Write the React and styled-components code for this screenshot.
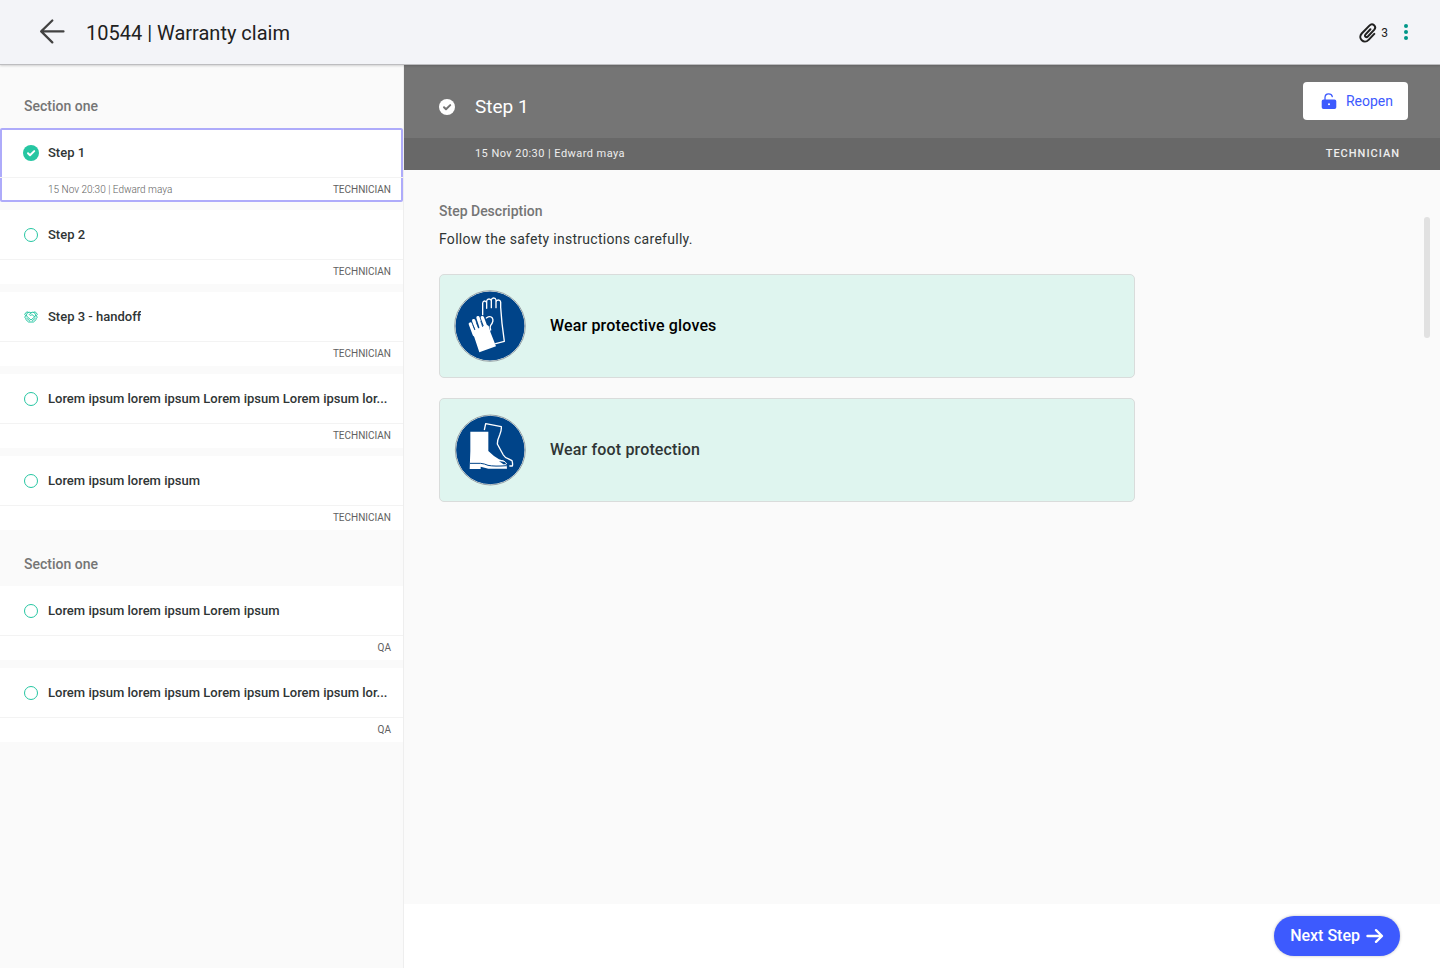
import React, { useState } from "react";
import styled, { createGlobalStyle } from "styled-components";

const GlobalStyle = createGlobalStyle`
  * {
    box-sizing: border-box;
  }
  body {
    margin: 0;
    font-family: Roboto, "Liberation Sans", sans-serif;
    color: #2f3535;
    background: #fafafa;
  }
  button {
    font-family: inherit;
    border: 0;
    padding: 0;
    background: none;
    cursor: pointer;
  }
  h1, h2, h3, p, ul {
    margin: 0;
    padding: 0;
  }
`;

const Page = styled.div`
  display: flex;
  flex-direction: column;
  min-height: 100vh;
`;

const Header = styled.header`
  position: relative;
  display: flex;
  align-items: center;
  height: 65px;
  padding: 0 24px 0 40px;
  background: #f3f4f8;
  border-bottom: 1px solid #bdbdc0;
  box-shadow: 0 1px 2px rgba(0, 0, 0, 0.16);
`;

const BackButton = styled.button`
  display: flex;
  margin-right: 21px;
  color: #424242;
`;

const Title = styled.h1`
  flex: 1;
  padding-top: 2px;
  font-size: 20px;
  font-weight: 400;
  line-height: 24px;
  color: #212121;
`;

const Attachments = styled.button`
  display: flex;
  align-items: center;
  gap: 4px;
  padding-top: 2px;
  font-size: 12px;
  color: #212121;
`;

const MenuButton = styled.button`
  display: flex;
  justify-content: center;
  width: 20px;
  margin-left: 8px;
  color: #009688;
`;

const Columns = styled.div`
  display: flex;
  flex: 1;
`;

const Sidebar = styled.nav`
  flex: 0 0 404px;
  min-width: 0;
  padding-top: 7px;
  border-right: 1px solid #eeeeee;
`;

const SectionTitle = styled.h2`
  padding: 24px 24px 12px;
  font-size: 14px;
  font-weight: 500;
  line-height: 20px;
  color: #757575;
`;

const StepList = styled.ul`
  display: flex;
  flex-direction: column;
  gap: 8px;
  list-style: none;
`;

const StepButton = styled.button`
  display: block;
  width: 100%;
  height: 74px;
  text-align: left;
  background: #ffffff;
  border-radius: ${props => (props.$selected ? "2px" : "0")};
  box-shadow: ${props => (props.$selected ? "inset 0 0 0 2px #aeabfa" : "none")};
`;

const StepName = styled.span`
  display: flex;
  align-items: center;
  gap: 9px;
  height: 50px;
  padding: 0 15px 0 23px;
  font-size: 13px;
  font-weight: 500;
  line-height: 16px;
  color: #2f3535;
  border-bottom: 1px solid #f3f3f3;
`;

const StepIcon = styled.span`
  display: flex;
  justify-content: center;
  flex: 0 0 16px;
  color: #26c6a2;
`;

const Circle = styled.span`
  width: 14px;
  height: 14px;
  border: 1px solid #26c6a2;
  border-radius: 50%;
`;

const Ellipsis = styled.span`
  overflow: hidden;
  white-space: nowrap;
  text-overflow: ellipsis;
`;

const StepMeta = styled.span`
  display: flex;
  align-items: center;
  justify-content: space-between;
  height: 24px;
  padding: 0 12px 0 48px;
  font-size: 10px;
  line-height: 16px;
  color: #616161;
`;

const Signed = styled.span`
  font-weight: 300;
`;

const Role = styled.span`
  margin-left: auto;
`;

const Detail = styled.main`
  display: flex;
  flex: 1;
  flex-direction: column;
  min-width: 0;
`;

const DetailHeader = styled.div`
  display: flex;
  align-items: center;
  height: 73px;
  padding: 0 32px 2px 35px;
  color: #ffffff;
  background: #757575;
`;

const DetailTitle = styled.h2`
  flex: 1;
  padding: 12px 0 0 20px;
  font-size: 19px;
  font-weight: 400;
  line-height: 24px;
`;

const DetailCheck = styled.span`
  display: flex;
  padding-top: 12px;
`;

const ReopenButton = styled.button`
  display: flex;
  align-items: center;
  justify-content: center;
  gap: 9px;
  width: 105px;
  height: 38px;
  padding-left: 3px;
  font-size: 14px;
  color: #3d5afe;
  background: #ffffff;
  border-radius: 4px;
`;

const DetailMeta = styled.div`
  display: flex;
  align-items: center;
  justify-content: space-between;
  height: 32px;
  padding: 0 40px 0 71px;
  font-size: 11px;
  line-height: 16px;
  color: #eeeeee;
  background: #686868;
`;

const DetailSigned = styled.span`
  letter-spacing: 0.04em;
`;

const DetailRole = styled.span`
  font-weight: 500;
  letter-spacing: 1px;
`;

const Content = styled.section`
  display: flex;
  flex: 1;
  justify-content: space-between;
  padding: 31px 10px 24px 35px;
  background: #fafafa;
`;

const Instructions = styled.div`
  flex: 1;
  max-width: 696px;
`;

const Label = styled.h3`
  font-size: 14px;
  font-weight: 500;
  line-height: 20px;
  color: #757575;
`;

const Text = styled.p`
  margin: 8px 0 25px;
  font-size: 14px;
  line-height: 20px;
  letter-spacing: 0.02em;
  color: #2f3535;
`;

const SafetyCard = styled.div`
  display: flex;
  align-items: center;
  gap: 24px;
  height: 104px;
  margin-bottom: 20px;
  padding: 0 14px;
  font-size: 16px;
  font-weight: 500;
  line-height: 20px;
  letter-spacing: 0.01em;
  color: ${props => (props.$strong ? "#000000" : "#2f3535")};
  background: #dff5ef;
  border: 1px solid #d9dcdb;
  border-radius: 5px;
`;

const ScrollThumb = styled.div`
  width: 6px;
  height: 121px;
  margin-top: 16px;
  background: #e1e1e1;
  border-radius: 3px;
`;

const Footer = styled.footer`
  display: flex;
  align-items: center;
  justify-content: flex-end;
  height: 64px;
  padding: 0 40px;
  background: #ffffff;
`;

const NextButton = styled.button`
  display: flex;
  align-items: center;
  gap: 6px;
  height: 40px;
  padding: 0 16px;
  font-size: 16px;
  font-weight: 500;
  line-height: 20px;
  color: #ffffff;
  background: #3d5afe;
  border-radius: 20px;
  box-shadow: 0 0 3px rgba(0, 0, 0, 0.25);
`;

const BackIcon = () => (
  <svg width="25" height="26" viewBox="0 0 25 26" fill="none" stroke="currentColor" strokeWidth="2.2" strokeLinecap="round" strokeLinejoin="round">
    <path d="M12.3 1.5 1.2 12.4l11.1 11M1.5 12.4h22" />
  </svg>
);

const ClipIcon = () => (
  <svg width="18" height="20" viewBox="0 0 18 20" fill="none" stroke="currentColor" strokeWidth="2" strokeLinecap="round" strokeLinejoin="round">
    <path d="M11.4 6.2 6.6 11.4c-1.500 1.700.6 3.700 2.200 2.100l6.300-6.600c3-3.300-1.500-7.600-4.700-4.300L2.700 10.500c-4.300 4.900 2.300 11.200 6.900 6.400l5.700-6" />
  </svg>
);

const DotsIcon = () => (
  <svg width="4" height="16" viewBox="0 0 4 16" fill="currentColor">
    <circle cx="2" cy="2" r="2" />
    <circle cx="2" cy="8" r="2" />
    <circle cx="2" cy="14" r="2" />
  </svg>
);

const CheckIcon = ({ tick }) => (
  <svg width="16" height="16" viewBox="0 0 16 16">
    <circle cx="8" cy="8" r="8" fill="currentColor" />
    <path d="m5 8.200 2 2 4.200-4.100" fill="none" stroke={tick} strokeWidth="2" strokeLinecap="round" strokeLinejoin="round" />
  </svg>
);

const HandoffIcon = () => (
  <svg width="14" height="12" viewBox="0 0 14 12" fill="none" stroke="currentColor" strokeWidth="1" strokeLinecap="round" strokeLinejoin="round">
    <path d="M4.500 1.500 2.800.8.6 3.300l1.200 1.300M9.500 1.500l1.700-.7 2.200 2.500-1.200 1.300" />
    <path d="M7 1.800C5.800.8 4.200 1 3.200 2.200c-1 1.200-.9 2.700.1 3.700L7 9l3.700-3.100c1-1 1.100-2.500.1-3.700C9.800 1 8.200.8 7 1.800L5.300 3.600c.6 1.100 1.900.8 2.700-.1l2.700 2.400" />
    <path d="M1.800 4.600.7 6.200l1 1 .1 1.300L4.500 11h5l2.700-2.500.1-1.300 1-1-1.100-1.600M2.800 7.300l2.800 2.500M11.200 7.300 8.400 9.800" />
  </svg>
);

const UnlockIcon = () => (
  <svg width="16" height="16" viewBox="0 0 16 16">
    <path d="M4 7V4.600C4 2.100 5.800.8 7.600.8s3.300 1 3.700 2.800" fill="none" stroke="currentColor" strokeWidth="1.300" strokeLinecap="round" />
    <path fillRule="evenodd" fill="currentColor" d="M2.500 6.500h11a1.800 1.800 0 0 1 1.800 1.800v5.900a1.800 1.800 0 0 1-1.800 1.800h-11a1.800 1.800 0 0 1-1.800-1.800V8.300a1.800 1.800 0 0 1 1.800-1.800ZM8 10.300a1 1 0 1 0 0 2 1 1 0 0 0 0-2Z" />
  </svg>
);

const NextIcon = () => (
  <svg width="18" height="16" viewBox="0 0 18 16" fill="none" stroke="currentColor" strokeWidth="2.400" strokeLinecap="round" strokeLinejoin="round">
    <path d="M1.500 8h14M10 2.200 16 8l-6 5.800" />
  </svg>
);

const GlovesIcon = () => (
  <svg width="72" height="72" viewBox="0 0 216 216">
    <circle cx="108" cy="108" r="105" fill="#004489" stroke="#e6efee" strokeWidth="3" />
    <circle cx="108" cy="108" r="106" fill="none" stroke="#767f86" strokeWidth="2" />
    <g fill="none" stroke="#fff" strokeWidth="4" strokeLinecap="round" strokeLinejoin="round">
      <path d="M86 74V39q1-6 6-6t6 6v16-22q1-6 7-6t7 6v20-23q1-6 7-6t7 6v23-17q1-6 7-6t7 6v16l4 48 7 54-26 7" />
      <path d="M97 84q12-8 18 0c4 7 0 16-5 22q-3 5 0 14" />
    </g>
    <g fill="none" stroke="#fff" strokeWidth="10" strokeLinecap="round">
      <path d="m49 102 12 32M59 92l14 38M72 83l13 40M85 83l13 34" />
    </g>
    <path d="m55 124 10-6 33-14 6 4 6 20 16 41-50 18Z" fill="#fff" />
    <path d="m57 106 6 13M67 98l7 17M80 93l6 18" fill="none" stroke="#004489" strokeWidth="2" />
  </svg>
);

const BootsIcon = () => (
  <svg width="72" height="72" viewBox="0 0 216 216">
    <circle cx="109" cy="108" r="104" fill="#004489" stroke="#e6efee" strokeWidth="3" />
    <circle cx="109" cy="108" r="105" fill="none" stroke="#767f86" strokeWidth="2" />
    <path
      d="m91 48 4-19 47 9q1 11-5 25-7 15-7 27l18 33q5 8 14 11l12 6q3 10 1 16h-9"
      fill="none"
      stroke="#fff"
      strokeWidth="4"
      strokeLinejoin="round"
    />
    <path d="M49 53h54v58q15 15 32 25 8 3 14 4 9 4 10 24h-56l-23-6v7H47l2-54Z" fill="#fff" />
    <path d="M48 148h32q11 1 22 6 20 4 56 1" fill="none" stroke="#004489" strokeWidth="3" />
    <path d="M135 142q10 6 13 9h13q-3-10-26-9Z" fill="#004489" />
    <path d="M137 140q15-2 21 10" fill="none" stroke="#fff" strokeWidth="3" />
  </svg>
);

const sections = [
  {
    title: "Section one",
    steps: [
      { name: "Step 1", status: "done", role: "TECHNICIAN", signed: "15 Nov 20:30 | Edward maya" },
      { name: "Step 2", role: "TECHNICIAN" },
      { name: "Step 3 - handoff", status: "handoff", role: "TECHNICIAN" },
      { name: "Lorem ipsum lorem ipsum Lorem ipsum Lorem ipsum lor...", role: "TECHNICIAN" },
      { name: "Lorem ipsum lorem ipsum", role: "TECHNICIAN" }
    ]
  },
  {
    title: "Section one",
    steps: [
      { name: "Lorem ipsum lorem ipsum Lorem ipsum", role: "QA" },
      { name: "Lorem ipsum lorem ipsum Lorem ipsum Lorem ipsum lor...", role: "QA" }
    ]
  }
];

function StatusIcon({ status }) {
  if (status === "done") return <CheckIcon tick="#ffffff" />;
  if (status === "handoff") return <HandoffIcon />;
  return <Circle />;
}

export default function App() {
  const [selected, setSelected] = useState("0-0");

  return (
    <Page>
      <GlobalStyle />
      <Header>
        <BackButton aria-label="Back">
          <BackIcon />
        </BackButton>
        <Title>10544 | Warranty claim</Title>
        <Attachments aria-label="3 attachments">
          <ClipIcon />
          <span>3</span>
        </Attachments>
        <MenuButton aria-label="More options">
          <DotsIcon />
        </MenuButton>
      </Header>
      <Columns>
        <Sidebar>
          {sections.map((section, i) => (
            <React.Fragment key={i}>
              <SectionTitle>{section.title}</SectionTitle>
              <StepList>
                {section.steps.map((step, j) => (
                  <li key={j}>
                    <StepButton
                      $selected={selected === `${i}-${j}`}
                      onClick={() => setSelected(`${i}-${j}`)}
                    >
                      <StepName>
                        <StepIcon>
                          <StatusIcon status={step.status} />
                        </StepIcon>
                        <Ellipsis>{step.name}</Ellipsis>
                      </StepName>
                      <StepMeta>
                        {step.signed && <Signed>{step.signed}</Signed>}
                        <Role>{step.role}</Role>
                      </StepMeta>
                    </StepButton>
                  </li>
                ))}
              </StepList>
            </React.Fragment>
          ))}
        </Sidebar>
        <Detail>
          <DetailHeader>
            <DetailCheck>
              <CheckIcon tick="#757575" />
            </DetailCheck>
            <DetailTitle>Step 1</DetailTitle>
            <ReopenButton>
              <UnlockIcon />
              Reopen
            </ReopenButton>
          </DetailHeader>
          <DetailMeta>
            <DetailSigned>15 Nov 20:30 | Edward maya</DetailSigned>
            <DetailRole>TECHNICIAN</DetailRole>
          </DetailMeta>
          <Content>
            <Instructions>
              <Label>Step Description</Label>
              <Text>Follow the safety instructions carefully.</Text>
              <SafetyCard $strong>
                <GlovesIcon />
                <span>Wear protective gloves</span>
              </SafetyCard>
              <SafetyCard>
                <BootsIcon />
                <span>Wear foot protection</span>
              </SafetyCard>
            </Instructions>
            <ScrollThumb />
          </Content>
          <Footer>
            <NextButton>
              Next Step
              <NextIcon />
            </NextButton>
          </Footer>
        </Detail>
      </Columns>
    </Page>
  );
}
